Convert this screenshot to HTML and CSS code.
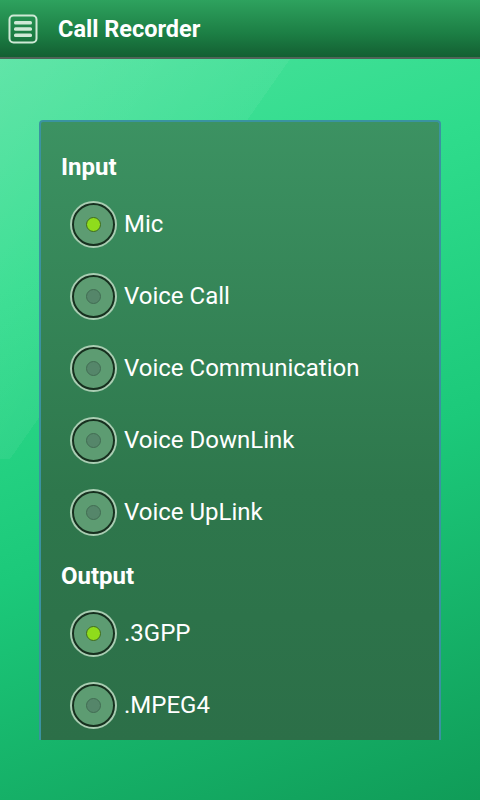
FILE: index.html
```html
<!DOCTYPE html>
<html lang="en">
<head>
    <meta charset="UTF-8" />
    <title>Call Recorder</title>
    <link rel="stylesheet" href="styles.css">
</head>
<body>
    <header class="bar">
        <span class="menu">
            <svg width="30" height="30" viewBox="0 0 30 30">
                <rect x="1.5" y="1.5" width="27" height="27" rx="4" fill="none" stroke="#cfe9d6" stroke-width="2"/>
                <rect x="6" y="7" width="18" height="3.5" rx="1.5" fill="#cfe9d6"/>
                <rect x="6" y="13.2" width="18" height="3.5" rx="1.5" fill="#cfe9d6"/>
                <rect x="6" y="19.5" width="18" height="3.5" rx="1.5" fill="#cfe9d6"/>
            </svg>
        </span>
        <h1>Call Recorder</h1>
    </header>

    <main class="content">
        <section class="panel">
            <!-- audio source -->
            <h2>Input</h2>
            <label class="opt on"><span class="dot"></span>Mic</label>
            <label class="opt"><span class="dot"></span>Voice Call</label>
            <label class="opt"><span class="dot"></span>Voice Communication</label>
            <label class="opt"><span class="dot"></span>Voice DownLink</label>
            <label class="opt"><span class="dot"></span>Voice UpLink</label>

            <!-- file format -->
            <h2>Output</h2>
            <label class="opt on"><span class="dot"></span>.3GPP</label>
            <label class="opt"><span class="dot"></span>.MPEG4</label>
        </section>
    </main>
</body>
</html>
```

FILE: styles.css
```css
body { margin: 0; height: 800px; overflow: hidden; font-family: Roboto, "Liberation Sans", sans-serif; color: #fff;
    background: linear-gradient(160deg, #52e3a0 0%, #2fdc8c 30%, #1cc97a 60%, #109c58 100%); }
.bar { height: 57px; display: flex; align-items: center; border-bottom: 2px solid #4f6458;
    background: linear-gradient(#2ea25e, #1c7e44 60%, #135f32); }
.menu { display: flex; margin: 0 0 0 8px; }
.bar h1 { margin: 0 0 0 20px; font-size: 23.5px; font-weight: bold; }
.content { padding: 61px 39px 0 39px; position: relative; }
.content::before { content: ""; position: absolute; left: 0; top: 0; width: 300px; height: 400px; z-index: -1;
    background: linear-gradient(125deg, rgba(255,255,255,0.12) 0%, rgba(255,255,255,0.05) 50%, transparent 50%); }
.panel { height: 588px; overflow: hidden; padding: 30px 0 0 20px; border: 2px solid #3a93a0; border-bottom: none;
    border-radius: 4px 4px 0 0; background: linear-gradient(#3c9262, #2e774c 60%, #2c6f48); }
.panel h2 { margin: 0; height: 30px; line-height: 30px; font-size: 24px; font-weight: bold; }
.opt { display: flex; align-items: center; height: 72px; margin-left: 11px; font-size: 24px; }
.panel h2 + .opt { margin-top: 6px; }
.opt + h2 { margin-top: 13px; }
.dot { width: 39px; height: 39px; margin-right: 9px; border-radius: 50%; display: flex; align-items: center; justify-content: center;
    background: #5d9c72; border: 2px solid #17301f; box-shadow: 0 0 0 2px #a9cdb2; }
.dot::after { content: ""; width: 13px; height: 13px; border-radius: 50%; background: #55866a; border: 1px solid #426c53; }
.on .dot::after { background: #8fdc1c; border-color: #3f6a20; }
```
